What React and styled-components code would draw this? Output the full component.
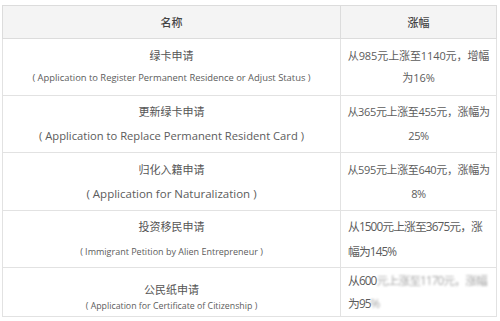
import styled, { createGlobalStyle } from "styled-components";

const GlobalStyle = createGlobalStyle`
  *, *::before, *::after { box-sizing: border-box; margin: 0; padding: 0; }
  body {
    background: #fff;
    font-family: "Open Sans", "Noto Sans CJK SC", sans-serif;
    color: #5a5a5a;
  }
`;

const Page = styled.div`
  padding: 5px 4px 0 2px;
  width: 500px;
  height: 321px;
  overflow: hidden;
`;

const Table = styled.table`
  width: 494px;
  border-collapse: collapse;
  table-layout: fixed;
  border: 1px solid #dcdcdc;
`;

const Head = styled.th`
  height: 33px;
  background: #f4f4f4;
  border: 1px solid #dcdcdc;
  font-weight: 500;
  font-size: 11px;
  color: #444;
  text-align: center;
`;

const Row = styled.tr`
  height: ${(p) => p.$h}px;
`;

const Cell = styled.td`
  border: 1px solid #e2e2e2;
  text-align: ${(p) => p.$align || "center"};
  vertical-align: middle;
  padding: ${(p) => p.$pad || "0"};
  font-size: ${(p) => p.$size}px;
  line-height: ${(p) => p.$lh}px;
  color: #5c5c5c;
  white-space: nowrap;
  letter-spacing: ${(p) => p.$ls || 0}px;
`;

const Title = styled.div`
  font-size: 11px;
  color: #555;
`;

const Sub = styled.div`
  font-size: ${(p) => p.$size}px;
  white-space: nowrap;
`;

const Blurred = styled.span`
  color: #a8a8a8;
  filter: blur(0.9px);
`;

const rows = [
  {
    h: 57,
    cn: "绿卡申请",
    en: "( Application to Register Permanent Residence or Adjust Status )",
    enSize: 9.4,
    lh: 22,
    rLh: 22,
    rise: ["从985元上涨至1140元，增幅", "为16%"],
    riseSize: 11,
    ls: -0.1,
    align: "center",
  },
  {
    h: 57,
    cn: "更新绿卡申请",
    en: "( Application to Replace Permanent Resident Card )",
    enSize: 11.2,
    lh: 24,
    rLh: 24,
    rise: ["从365元上涨至455元，涨幅为", "25%"],
    riseSize: 11,
    ls: -0.35,
    align: "center",
  },
  {
    h: 58,
    cn: "归化入籍申请",
    en: "( Application for Naturalization )",
    enSize: 11.5,
    lh: 24,
    rLh: 24,
    rise: ["从595元上涨至640元，涨幅为", "8%"],
    riseSize: 11,
    ls: -0.35,
    align: "center",
  },
  {
    h: 57,
    cn: "投资移民申请",
    en: "( Immigrant Petition by Alien Entrepreneur )",
    enSize: 9,
    lh: 25,
    rLh: 25,
    rise: ["从1500元上涨至3675元，涨", "幅为145%"],
    riseSize: 11.8,
    ls: -0.9,
    align: "left",
  },
  {
    h: 49,
    cn: "公民纸申请",
    en: "( Application for Certificate of Citizenship )",
    enSize: 8.8,
    lh: 17,
    rLh: 23,
    pad: "12px 0 0",
    rise: null,
    riseSize: 11.8,
    ls: -0.9,
    align: "left",
  },
];

export default function App() {
  return (
    <>
      <GlobalStyle />
      <Page>
        <Table>
          <colgroup>
            <col style={{ width: 338 }} />
            <col style={{ width: 156 }} />
          </colgroup>
          <thead>
            <tr>
              <Head>名称</Head>
              <Head>涨幅</Head>
            </tr>
          </thead>
          <tbody>
            {rows.map((r) => (
              <Row key={r.cn} $h={r.h}>
                <Cell $size={11} $lh={r.lh} $pad={r.pad}>
                  <Title>{r.cn}</Title>
                  <Sub $size={r.enSize}>{r.en}</Sub>
                </Cell>
                <Cell
                  $size={r.riseSize}
                  $lh={r.rLh}
                  $align={r.align}
                  $pad={r.align === "left" ? "0 0 0 7px" : "0"}
                  $ls={r.ls}
                >
                  {r.rise ? (
                    <>
                      {r.rise[0]}
                      <br />
                      {r.rise[1]}
                    </>
                  ) : (
                    <>
                      从600<Blurred>元上涨至1170元，涨幅</Blurred>
                      <br />
                      为95<Blurred>%</Blurred>
                    </>
                  )}
                </Cell>
              </Row>
            ))}
          </tbody>
        </Table>
      </Page>
    </>
  );
}
